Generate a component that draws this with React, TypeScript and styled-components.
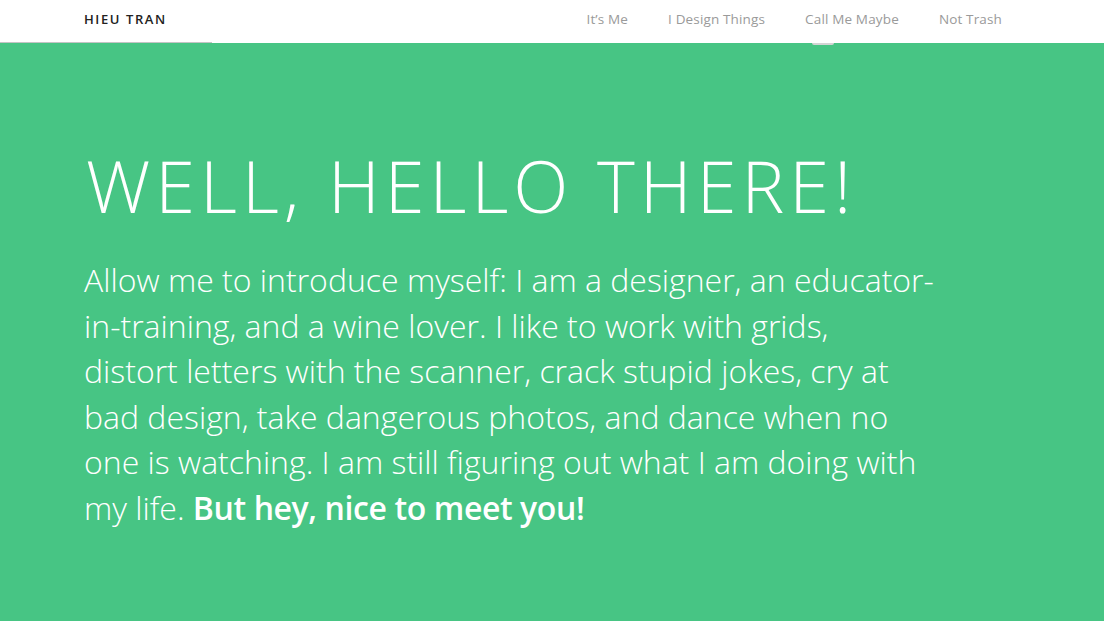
import styled, { createGlobalStyle } from 'styled-components'

const GlobalStyle = createGlobalStyle`
  html, body {
    margin: 0;
    padding: 0;
    background: #47c584;
  }
  body {
    font-family: 'Open Sans', 'Noto Sans', sans-serif;
  }
`

const Header = styled.header`
  height: 43px;
  background: #fff;
  position: relative;
`

const HeaderInner = styled.div`
  width: 940px;
  margin: 0 auto;
  height: 100%;
  display: flex;
  align-items: center;
  justify-content: space-between;
`

// faint grey rule under the left part of the header
const Rule = styled.div`
  position: absolute;
  left: 0;
  bottom: 0;
  width: 212px;
  height: 1px;
  background: #c4c4c4;
`

const Logo = styled.div`
  font-family: 'Open Sans', sans-serif;
  font-size: 13px;
  font-weight: 600;
  letter-spacing: 1.6px;
  color: #222;
  padding-left: 2px;
  padding-bottom: 5px;
`

const Nav = styled.nav`
  display: flex;
  align-items: center;
`

const NavLink = styled.a<{ $active?: boolean }>`
  position: relative;
  font-family: 'Open Sans', sans-serif;
  font-size: 13.5px;
  letter-spacing: 0.15px;
  color: #9a9a9a;
  text-decoration: none;
  padding: 0 20px 5px;
  height: 43px;
  box-sizing: border-box;
  display: flex;
  align-items: center;

  &::after {
    content: '';
    display: ${p => (p.$active ? 'block' : 'none')};
    position: absolute;
    left: 27px;
    bottom: -2px;
    width: 22px;
    height: 2px;
    border-radius: 0 0 3px 3px;
    background: #d4d4d4;
  }
`

const Hero = styled.section`
  width: 940px;
  margin: 0 auto;
  padding: 106px 0 80px;
  color: #fff;
`

const Title = styled.h1`
  margin: 0 0 36px;
  font-family: 'Open Sans', sans-serif;
  font-weight: 300;
  font-size: 72px;
  line-height: 1;
  letter-spacing: 5px;
  padding-left: 4px;
  white-space: nowrap;
`

const Intro = styled.p`
  margin: 0;
  padding-left: 2px;
  font-family: 'Open Sans', sans-serif;
  font-weight: 300;
  font-size: 32px;
  line-height: 45.5px;
  white-space: nowrap;
`

const Emphasis = styled.strong`
  font-weight: 600;
  letter-spacing: -0.4px;
`

const lines = [
  'Allow me to introduce myself: I am a designer, an educator-',
  'in-training, and a wine lover. I like to work with grids,',
  'distort letters with the scanner, crack stupid jokes, cry at',
  'bad design, take dangerous photos, and dance when no',
  'one is watching. I am still figuring out what I am doing with',
]

export default function App() {
  return (
    <>
      <GlobalStyle />
      <Header>
        <HeaderInner>
          <Logo>HIEU TRAN</Logo>
          <Nav>
            <NavLink href="#">It’s Me</NavLink>
            <NavLink href="#">I Design Things</NavLink>
            <NavLink href="#" $active>Call Me Maybe</NavLink>
            <NavLink href="#">Not Trash</NavLink>
          </Nav>
        </HeaderInner>
        <Rule />
      </Header>
      <Hero>
        <Title>WELL, HELLO THERE!</Title>
        <Intro>
          {lines.map(line => (
            <span key={line}>
              {line}
              <br />
            </span>
          ))}
          my life. <Emphasis>But hey, nice to meet you!</Emphasis>
        </Intro>
      </Hero>
    </>
  )
}
